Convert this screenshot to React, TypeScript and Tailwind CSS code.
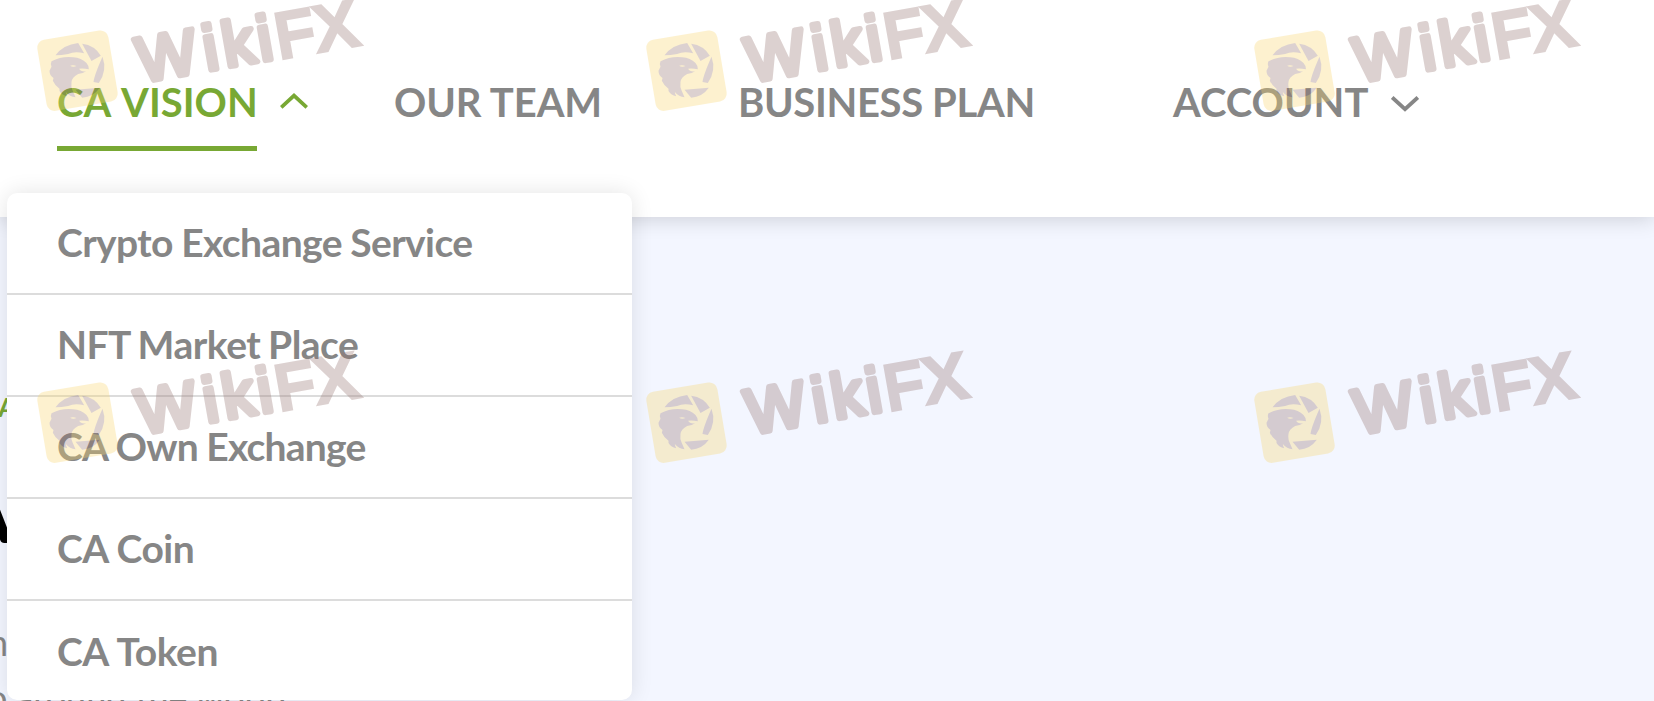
import React from "react";

const MARKS = [
  "translate(686.5 70)",
  "translate(77.5 70)",
  "translate(1294.5 70)",
  "translate(686.5 422)",
  "translate(77.5 422)",
  "translate(1294.5 422)",
];

const MENU = [
  { label: "Crypto Exchange Service", spacing: "tracking-[-0.6px] [word-spacing:-0.6px]" },
  { label: "NFT Market Place", spacing: "tracking-[-0.5px] [word-spacing:-1.2px]" },
  { label: "CA Own Exchange", spacing: "tracking-[-0.8px] [word-spacing:-0.2px]" },
  { label: "CA Coin", spacing: "tracking-[-0.5px] [word-spacing:0px]" },
  { label: "CA Token", spacing: "tracking-[-0.45px] [word-spacing:1px]" },
];

function Mark({ transform }: { transform: string }) {
  return (
    <g transform={transform} opacity="0.33">
      <rect x="-36" y="-36" width="72" height="72" rx="8" fill="#f9d770" transform="translate(0 0.7) rotate(-9.5)" />
      <g transform="scale(0.3333) translate(-138 -124)" fill="#987673">
        <path d="M72 80 Q95 48 140 43 L158 74 Q130 66 110 76 Q90 80 72 80Z" />
        <path d="M152 45 Q190 50 208 81 L180 97 Z" />
        <path d="M213 84 Q228 125 202 163 L186 160 Q188 140 213 84Z" />
        <path d="M132 183 L205 177 Q185 205 152 207 Z" />
        <path d="M60 98 Q90 82 125 86 Q150 88 165 103 Q173 112 172 122 Q155 118 143 120 Q148 130 164 128 Q155 134 140 136 Q122 145 120 160 Q118 175 123 185 L132 206 Q115 205 103 190 Q104 198 107 203 Q92 200 84 187 L84 180 Q70 170 64 156 L66 148 Q54 140 54 126 L60 114 Q56 106 60 98Z" />
        <path d="M116 111 Q125 108 135 112 Q124 117 116 111Z" fill="#f9d770" />
      </g>
      <g
        transform="rotate(-10)"
        fontFamily="Liberation Sans, sans-serif"
        fill="#987673"
        stroke="#987673"
      >
        <text x="60.5 127.5 147 182.5" y="23" fontSize="63" strokeWidth="5.8" strokeLinejoin="round">
          Wiki
        </text>
        <text x="201 241" y="23.5" fontSize="63" strokeWidth="5" strokeLinejoin="miter">
          FX
        </text>
      </g>
    </g>
  );
}

function Chevron({ up = false }: { up?: boolean }) {
  return (
    <svg width="28" height="16" viewBox="0 0 28 16" fill="none" stroke="currentColor" strokeWidth="3.8">
      <path d={up ? "M1.2 14.4 L14 2.6 L26.8 14.4" : "M1.2 1.4 L14 13.2 L26.8 1.4"} />
    </svg>
  );
}

export default function App() {
  return (
    <div className="relative h-[701px] w-full overflow-hidden bg-[#f3f6ff] font-['Lato',sans-serif]">
      <header className="relative z-10 h-[217px] bg-white shadow-[0_2px_20px_rgba(0,0,0,0.16)]">
        <nav className="flex pl-[57px] pt-[78px] text-[40px] font-bold leading-[48px] text-[#868686]">
          <div className="flex w-[337px] gap-[23px] text-[#78a834]">
            <span className="h-[73px] w-[200px] whitespace-nowrap border-b-[5px] border-[#78a834] [word-spacing:3px]">CA VISION</span>
            <span className="pt-[15px]"><Chevron up /></span>
          </div>
          <span className="w-[344px] whitespace-nowrap tracking-[-0.1px]">OUR TEAM</span>
          <span className="w-[435px] whitespace-nowrap tracking-[-0.35px]">BUSINESS PLAN</span>
          <div className="flex">
            <span className="w-[218px] whitespace-nowrap">ACCOUNT</span>
            <span className="pt-[18px]"><Chevron /></span>
          </div>
        </nav>
      </header>

      <main className="flex flex-col whitespace-nowrap">
        <p className="-ml-[2px] mt-[170px] h-[40px] text-[27px] font-bold leading-[40px] text-[#78a834]">A</p>
        <p className="-ml-[41px] mt-[47px] h-[80px] text-[76px] font-black leading-[80px] text-black">A</p>
        <p className="-ml-[12px] mt-[68px] h-[40px] text-[36px] leading-[40px] text-[#868686]">n</p>
        <p className="-ml-[13px] mt-[11px] flex h-[48px] gap-[8px] text-[36px] leading-[48px] text-[#868686]">
          <span>o</span>
          <span>around the world</span>
        </p>
      </main>

      <ul className="absolute left-[7px] top-[193px] z-20 flex h-[507px] w-[625px] flex-col rounded-[10px] bg-white shadow-[0_0_22px_rgba(0,0,0,0.11)]">
        {MENU.map(({ label, spacing }) => (
          <li
            key={label}
            className={`flex h-[102px] shrink-0 items-center border-b-2 border-[#dcdcdc] pb-[2px] pl-[50px] text-[39px] font-bold text-[#868686] last:h-[99px] last:border-b-0 last:pb-0 last:pt-[1px] ${spacing}`}
          >
            {label}
          </li>
        ))}
      </ul>

      <svg className="pointer-events-none absolute left-0 top-0 z-30" width="1654" height="701" viewBox="0 0 1654 701" aria-hidden="true">
        {MARKS.map((t) => (
          <Mark key={t} transform={t} />
        ))}
      </svg>
    </div>
  );
}
